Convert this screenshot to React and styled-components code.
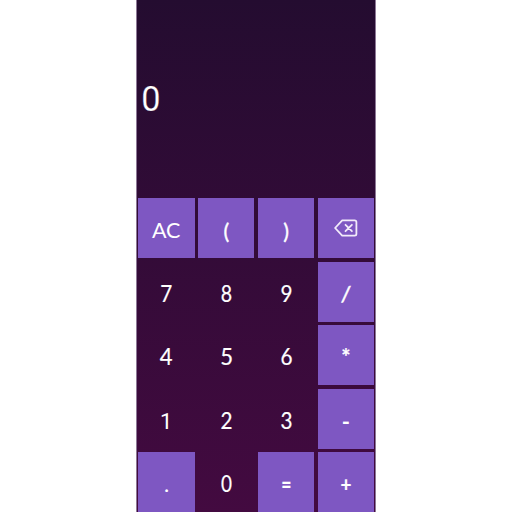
import React from 'react';
import styled, { createGlobalStyle } from 'styled-components';

const GlobalStyle = createGlobalStyle`
  * { box-sizing: border-box; }
  body { margin: 0; background: #fff; overflow: hidden; }
`;

const Page = styled.main`
  height: 512px;
  display: flex;
  padding-left: 136px;
`;

const Calculator = styled.section`
  width: 240px;
  height: 512px;
  display: flex;
  flex-direction: column;
  overflow: hidden;
  border: solid #8d7896;
  border-width: 0 1px;
  color: #fff;
  background: linear-gradient(#240c30, #430a40);
`;

const Display = styled.output`
  display: flex;
  flex: none;
  align-items: center;
  height: 198px;
  padding: 1px 0 0 4.4px;
  font: 35px/40px Roboto, sans-serif;
`;

const Digits = styled.span`
  transform: scaleX(0.98);
  -webkit-text-stroke: 0.2px #2a0c33;
`;

const Keypad = styled.div`
  display: grid;
  flex: none;
  grid-template-columns: repeat(4, 56.4px);
  grid-auto-rows: 60.2px;
  gap: 3.4px;
  padding-left: 1.3px;
`;

const Key = styled.button`
  display: flex;
  align-items: center;
  justify-content: center;
  padding: 0;
  border: 0;
  color: #fff;
  background: ${(p) => (p.$accent ? '#7e57c2' : 'transparent')};
`;

const Label = styled.span`
  font: ${(p) => p.$weight || 400} ${(p) => p.$size || 22}px/28px ${(p) => p.$font || 'Lato'}, sans-serif;
  -webkit-text-stroke: ${(p) => p.$stroke ?? 0.2}px #fff;
  transform: translate(${(p) => p.$x || 0}px, ${(p) => p.$y || 0}px) scaleX(${(p) => p.$stretch || 1});
`;

const BackspaceIcon = styled.svg`
  width: 24px;
  height: 18px;
  display: block;
`;

const keys = [
  { label: 'AC', accent: true, size: 21.5, y: 1.5, x: -0.3, stroke: 0 },
  { label: '(', accent: true, y: 2.5, size: 21.5, stroke: 0.4 },
  { label: ')', accent: true, y: 2.5, size: 21.5, stroke: 0.4 },
  { label: 'backspace', accent: true },
  { label: '7', stretch: 0.92, y: 2, size: 22.5, x: -0.3 },
  { label: '8', stretch: 0.87, y: 2, size: 22.5 },
  { label: '9', stretch: 0.92, y: 2, size: 22.5 },
  { label: '/', accent: true, y: 2, stretch: 1.1, stroke: 0.4 },
  { label: '4', stretch: 0.98, y: 2, size: 22.5, x: -0.3 },
  { label: '5', stretch: 0.98, y: 2, size: 22.5 },
  { label: '6', stretch: 0.92, y: 2, size: 22.5 },
  { label: '*', accent: true, y: 1.5, weight: 700 },
  { label: '1', font: 'Roboto', y: 2.5, x: -0.3, stroke: 0 },
  { label: '2', stretch: 0.92, y: 2, size: 22.5 },
  { label: '3', stretch: 0.92, y: 2, size: 22.5 },
  { label: '-', accent: true, y: 3, weight: 700, stroke: 0 },
  { label: '.', accent: true, y: 2, stroke: 0 },
  { label: '0', stretch: 0.84, y: 2, size: 22.5 },
  { label: '=', accent: true, y: 2.5, weight: 700, stretch: 0.8, stroke: 0.2 },
  { label: '+', accent: true, y: 2, weight: 700, stretch: 0.9, size: 21, stroke: 0.2 },
];

const Backspace = () => (
  <BackspaceIcon viewBox="0 0 24 18" fill="none" stroke="#f2ebfa" strokeWidth="1.8" strokeLinecap="round" strokeLinejoin="round">
    <path d="M8.2 1.4H20.6Q22.4 1.4 22.4 3V15Q22.4 16.6 20.6 16.6H8.2L1.1 9Z" />
    <path d="M11.5 5.8L17.9 12.2M17.9 5.8L11.5 12.2" />
  </BackspaceIcon>
);

export default function App() {
  return (
    <Page>
      <GlobalStyle />
      <Calculator>
        <Display>
          <Digits>0</Digits>
        </Display>
        <Keypad>
          {keys.map((k) => (
            <Key key={k.label} $accent={k.accent} aria-label={k.label}>
              {k.label === 'backspace' ? (
                <Backspace />
              ) : (
                <Label $font={k.font} $size={k.size} $weight={k.weight} $x={k.x} $y={k.y} $stretch={k.stretch} $stroke={k.stroke}>
                  {k.label}
                </Label>
              )}
            </Key>
          ))}
        </Keypad>
      </Calculator>
    </Page>
  );
}
